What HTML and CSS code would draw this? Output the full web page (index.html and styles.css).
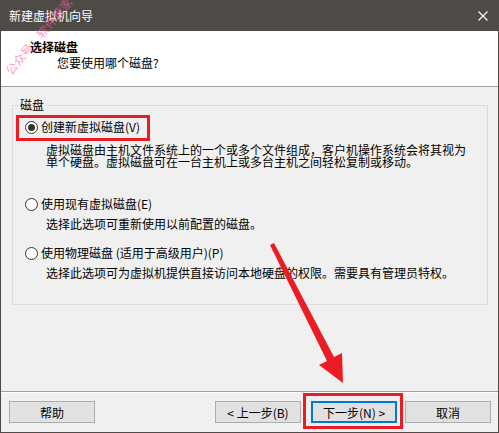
FILE: index.html
```html
<!DOCTYPE html>
<html lang="zh-CN">
<head>
  <meta charset="UTF-8">
  <title>新建虚拟机向导</title>
  <meta name="viewport" content="width=device-width, initial-scale=1.0">
  <link rel="stylesheet" href="styles.css">
</head>
<body>

  <div class="window">

    <!-- title bar -->
    <div class="titlebar">
      <span class="title">新建虚拟机向导</span>
      <svg class="close" width="10" height="10" viewBox="0 0 10 10">
        <path d="M0.5 0.5 L9.5 9.5 M9.5 0.5 L0.5 9.5" stroke="#ffffff" stroke-width="1.1" fill="none"/>
      </svg>
    </div>

    <!-- page header -->
    <div class="header">
      <div class="head-title">选择磁盘</div>
      <div class="head-sub">您要使用哪个磁盘?</div>
    </div>

    <!-- options -->
    <div class="content">
      <fieldset class="group">
        <legend>磁盘</legend>

        <label class="option marked">
          <span class="radio checked"></span>创建新虚拟磁盘(V)
        </label>
        <p class="desc first">虚拟磁盘由主机文件系统上的一个或多个文件组成，客户机操作系统会将其视为<br>单个硬盘。虚拟磁盘可在一台主机上或多台主机之间轻松复制或移动。</p>

        <label class="option second">
          <span class="radio"></span>使用现有虚拟磁盘(E)
        </label>
        <p class="desc">选择此选项可重新使用以前配置的磁盘。</p>

        <label class="option third">
          <span class="radio"></span>使用物理磁盘 (适用于高级用户)(P)
        </label>
        <p class="desc">选择此选项可为虚拟机提供直接访问本地硬盘的权限。需要具有管理员特权。</p>
      </fieldset>
    </div>

    <!-- buttons -->
    <div class="footer">
      <button class="btn">帮助</button>
      <button class="btn back">&lt; 上一步(B)</button>
      <span class="pick">
        <button class="btn primary">下一步(N) &gt;</button>
      </span>
      <button class="btn cancel">取消</button>
    </div>

    <!-- overlays -->
    <span class="watermark">公众号：软件管家</span>
    <svg class="arrow" width="499" height="433" viewBox="0 0 499 433">
      <polygon points="270,245 274,243 334,357 342,353 343,383 319,365 327,361" fill="#ec1c24"/>
    </svg>

  </div>

</body>
</html>
```

FILE: styles.css
```css
body {
  margin: 0;
  padding: 0;
  font-family: "Noto Sans CJK SC", "Noto Sans", sans-serif;
  font-size: 12px;
  color: #000;
}

.window {
  position: relative;
  width: 499px;
  height: 433px;
  box-sizing: border-box;
  border: 1px solid #4d4a47;
  border-top: none;
  background: #f0f0f0;
  overflow: hidden;
}

.titlebar {
  height: 31px;
  margin: 0 -1px;
  padding: 0 11px 0 9px;
  background: #4d4a47;
  color: #fff;
  display: flex;
  align-items: center;
  justify-content: space-between;
}

.title { font-size: 12px; line-height: 16px; }

.header {
  height: 56px;
  padding: 8px 0 0 0;
  box-sizing: border-box;
  background: #fff;
  border-bottom: 1px solid #a0a0a0;
}

.head-title {
  margin-left: 29px;
  font-weight: bold;
  line-height: 16px;
}

.head-sub {
  margin-left: 56px;
  line-height: 16px;
}

.content {
  height: 304px;
  padding: 10px 10px 0 11px;
  box-sizing: border-box;
}

.group {
  margin: 0;
  padding: 0 0 25px 0;
  border: 1px solid #dcdcdc;
}

.group legend {
  margin-left: 5px;
  padding: 0 2px;
  line-height: 16px;
}

.option {
  display: flex;
  align-items: center;
  gap: 3px;
  line-height: 16px;
  margin-left: 12px;
}

.option.marked {
  width: fit-content;
  margin: 2px 0 0 3px;
  padding: 1px 7px 3px 6px;
  border: 3px solid #ec1c24;
}

.option.second { margin-top: 28px; }
.option.third { margin-top: 15px; }

.radio {
  position: relative;
  width: 13px;
  height: 13px;
  box-sizing: border-box;
  border: 1px solid #333;
  border-radius: 50%;
  background: #fff;
  flex-shrink: 0;
}

.radio.checked::after {
  content: "";
  position: absolute;
  left: 2px; top: 2px;
  width: 7px; height: 7px;
  border-radius: 50%;
  background: #333;
}

.desc {
  margin: 6px 0 0 33px;
  line-height: 12px;
  white-space: nowrap;
}

.desc.first { margin-top: 3px; }

.footer {
  height: 39px;
  box-sizing: border-box;
  padding: 9px 7px 0 8px;
  border-top: 1px solid #a0a0a0;
  box-shadow: inset 0 1px #fff;
  display: flex;
  align-items: flex-start;
}

.btn {
  width: 86px;
  height: 22px;
  box-sizing: border-box;
  border: 1px solid #adadad;
  background: #e1e1e1;
  font-family: inherit;
  font-size: 12px;
  color: #000;
  padding: 0;
}

.btn.back { margin-left: auto; }

.btn.primary { border: 2px solid #0078d7; }

.pick {
  display: flex;
  margin: -8px 0 0 2px;
  padding: 5px 3px 3px 5px;
  border: 3px solid #ec1c24;
}

.btn.cancel { margin-left: 2px; }

.watermark {
  position: absolute;
  left: -12px;
  top: 26px;
  width: 104px;
  transform: rotate(-50deg);
  color: rgba(255, 90, 160, 0.65);
  font-size: 12px;
  line-height: 14px;
  white-space: nowrap;
  pointer-events: none;
}

.arrow {
  position: absolute;
  left: -1px;
  top: 0;
  pointer-events: none;
}
```
